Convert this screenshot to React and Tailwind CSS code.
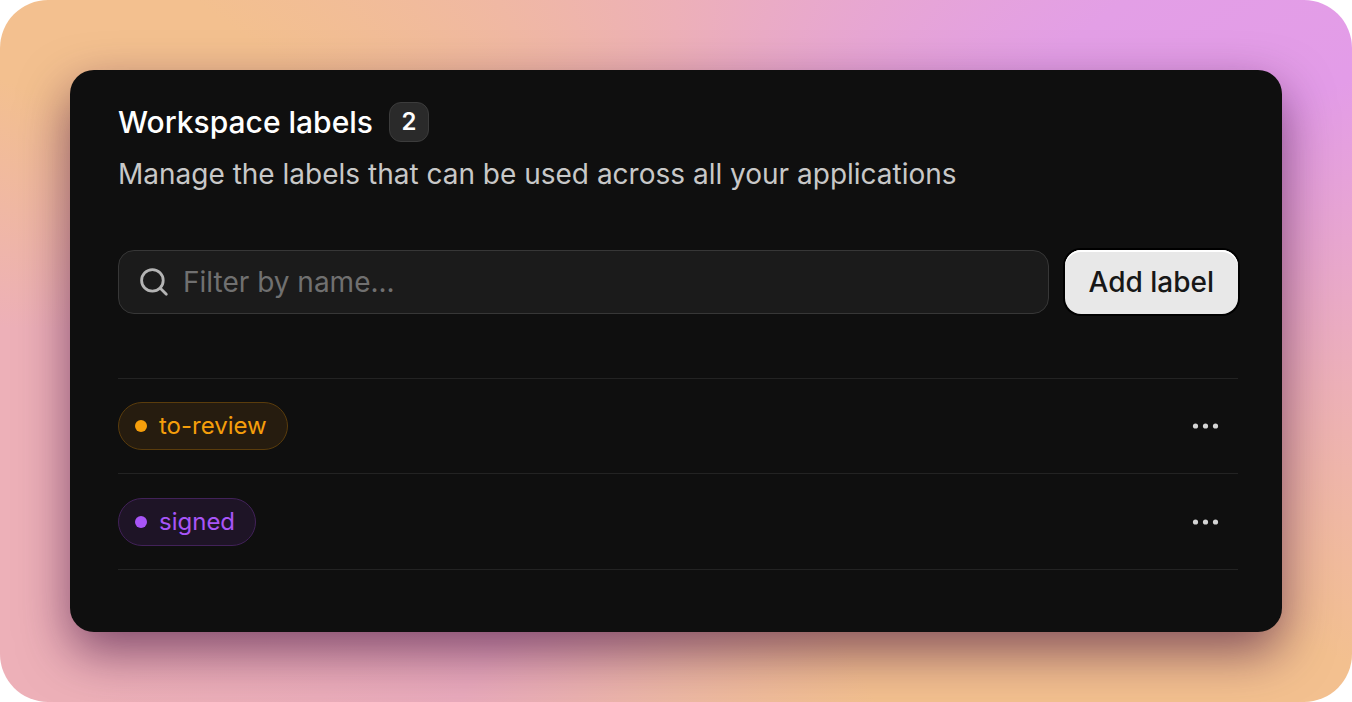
import { useState } from 'react';

const labels = [
  { name: 'to-review', pill: 'border-[#5a3c0c] bg-[#261c0f] text-[#f59e0b]', dot: 'bg-[#f59e0b]' },
  { name: 'signed', pill: 'border-[#422259] bg-[#1e1426] text-[#a855f7]', dot: 'bg-[#a855f7]' },
];

function SearchIcon() {
  return (
    <svg className="size-8 shrink-0" viewBox="0 0 32 32" fill="none" stroke="#b4b4b4" strokeWidth="2.8" strokeLinecap="round" aria-hidden="true">
      <circle cx="13.4" cy="14.4" r="10.8" />
      <path d="M21.3 22.2 L27.3 28.2" />
    </svg>
  );
}

function DotsIcon() {
  return (
    <svg className="size-8" viewBox="0 0 32 32" fill="#d4d4d4" aria-hidden="true">
      <circle cx="5.5" cy="16" r="2.6" />
      <circle cx="15.5" cy="16" r="2.6" />
      <circle cx="25.5" cy="16" r="2.6" />
    </svg>
  );
}

function LabelRow({ label }) {
  return (
    <li className="flex h-24 items-center justify-between border-b border-[#232323] first:-mt-px">
      <span className={`flex h-12 items-center gap-3 rounded-full border pr-5 pl-4 text-2xl ${label.pill}`}>
        <span className={`size-3 rounded-full ${label.dot}`} />
        {label.name}
      </span>
      <button type="button" aria-label={`Options for ${label.name}`} className="mr-4">
        <DotsIcon />
      </button>
    </li>
  );
}

function App() {
  const [filter, setFilter] = useState('');
  const visible = labels.filter((label) => label.name.includes(filter.toLowerCase()));

  return (
    <div className="min-h-screen overflow-hidden rounded-[48px] bg-[conic-gradient(#edb0b8_0deg,#e39fe6_52deg,#e39ce8_68deg,#edb0b8_93deg,#f3c08f_115deg,#f3c08f_150deg,#edb8a4_180deg,#e9aabc_212deg,#edb0b8_240deg,#edb0b8_272deg,#f3c08f_292deg,#f3c08f_306deg,#edb0b8_360deg)] p-[70px] font-['Inter',sans-serif]">
      <main className="rounded-3xl bg-[#0f0f0f] px-12 pt-8 pr-11 pb-[62px] shadow-[0_20px_50px_rgba(60,10,60,0.6)]">
        <div className="flex items-center gap-4">
          <h1 className="text-[30px] leading-10 font-medium text-white">Workspace labels</h1>
          <span className="flex size-10 items-center justify-center rounded-xl border border-[#3c3c3c] bg-[#2a2a2a] text-2xl font-semibold text-white">
            {labels.length}
          </span>
        </div>
        <p className="mt-3 text-[28px] leading-10 text-[#c8c8c8]">
          Manage the labels that can be used across all your applications
        </p>

        <div className="mt-14 flex gap-4">
          <label className="flex h-16 flex-1 items-center gap-3 rounded-2xl border border-[#373737] bg-[#1b1b1b] px-5">
            <SearchIcon />
            <input
              type="text"
              aria-label="Filter by name"
              placeholder="Filter by name..."
              value={filter}
              onChange={(e) => setFilter(e.target.value)}
              className="min-w-0 flex-1 bg-transparent text-[28px] leading-10 text-white outline-none placeholder:text-[#707070]"
            />
          </label>
          <button
            type="button"
            className="h-16 rounded-2xl bg-[#e8e8e8] px-6 text-[28px] leading-10 font-medium text-[#171717] shadow-[0_0_0_2px_#000,inset_0_2px_0_#fff]"
          >
            Add label
          </button>
        </div>

        <ul className="mt-16 border-t border-[#232323]">
          {visible.map((label) => (
            <LabelRow key={label.name} label={label} />
          ))}
        </ul>
      </main>
    </div>
  );
}

export default App;
